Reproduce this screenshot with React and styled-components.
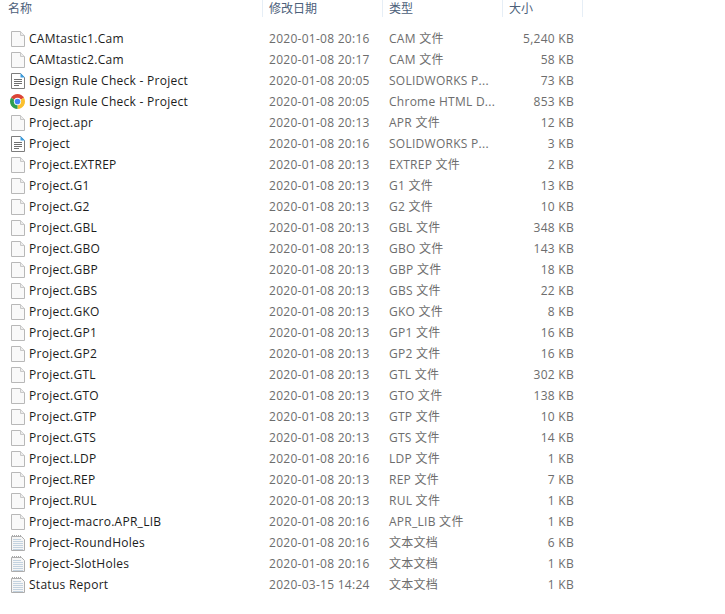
import React from 'react';
import styled, { createGlobalStyle } from 'styled-components';

const Global = createGlobalStyle`
  html, body { margin: 0; background: #fff; }
  body { font-family: "Open Sans", "Noto Sans CJK SC", sans-serif; font-size: 12px; }
`;

const Page = styled.div`
  width: 725px;
  height: 614px;
  overflow: hidden;
  background: #fff;
`;

const Header = styled.div`
  display: flex;
  height: 18px;
`;

const HeadCell = styled.div`
  width: ${(p) => p.$w}px;
  box-sizing: border-box;
  padding-left: ${(p) => p.$pad}px;
  height: 17px;
  line-height: 17px;
  color: #4c607a;
  border-right: 1px solid #e6eef6;
`;

const List = styled.div`
  padding-top: 10px;
`;

const Row = styled.div`
  display: flex;
  align-items: center;
  height: 21px;
  line-height: 21px;
  white-space: nowrap;
  letter-spacing: 0.27px;
`;

const Name = styled.div`
  width: 269px;
  display: flex;
  align-items: center;
  gap: 3px;
  padding-left: 10px;
  box-sizing: border-box;
  color: #1c1c1c;
`;

const Muted = styled.div`
  width: ${(p) => p.$w}px;
  color: #6d6d6d;
  text-align: ${(p) => (p.$right ? 'right' : 'left')};
`;

const Icon = styled.svg`
  width: 16px;
  height: 16px;
  flex: none;
`;

const RoundIcon = styled(Icon)`
  width: 15px;
  height: 15px;
  margin-right: 1px;
`;

const BlankIcon = () => (
  <Icon viewBox="0 0 16 16">
    <path d="M1.5.5h9l4 4v11h-13z" fill="#f9f9f9" stroke="#b8b8b8" />
    <path d="M10.5.5v4h4" fill="#ececec" stroke="#c8c8c8" />
  </Icon>
);

const DocIcon = () => (
  <Icon viewBox="0 0 16 16">
    <path d="M1.5.5h9l4 4v11h-13z" fill="#fff" stroke="#7d7d7d" />
    <path d="M10.5 0l4.5 4.5h-4.5z" fill="#3c9ee0" />
    <path d="M4 6.5h8M4 8.5h8M4 10.5h8M4 12.5h5" stroke="#6f6f6f" />
  </Icon>
);

const TextIcon = () => (
  <Icon viewBox="0 0 16 16">
    <path d="M1.5 1.5h10l3 3v11h-13z" fill="#f6f6f6" stroke="#adadad" />
    <path d="M3 4.5h8M3 6.5h10M3 8.5h10M3 10.5h10M3 12.5h10M3 14.5h10" stroke="#c3d2df" />
    <path d="M2 .5h1M4 .5h1M6 .5h1M8 .5h1M10 .5h1" stroke="#a8a8a8" />
  </Icon>
);

const ChromeIcon = () => (
  <RoundIcon viewBox="0 0 16 16">
    <path d="M8 8L1.1 4A8 8 0 0 1 14.9 4z" fill="#db4437" />
    <path d="M8 8L14.9 4A8 8 0 0 1 8 16z" fill="#fbc02d" />
    <path d="M8 8L8 16A8 8 0 0 1 1.1 4z" fill="#2e9e4f" />
    <circle cx="8" cy="8" r="3.9" fill="#fff" />
    <circle cx="8" cy="8" r="3" fill="#4285f4" />
  </RoundIcon>
);

const icons = { b: BlankIcon, d: DocIcon, t: TextIcon, c: ChromeIcon };

const files = [
  ['b', 'CAMtastic1.Cam', '2020-01-08 20:16', 'CAM 文件', '5,240 KB'],
  ['b', 'CAMtastic2.Cam', '2020-01-08 20:17', 'CAM 文件', '58 KB'],
  ['d', 'Design Rule Check - Project', '2020-01-08 20:05', 'SOLIDWORKS P...', '73 KB'],
  ['c', 'Design Rule Check - Project', '2020-01-08 20:05', 'Chrome HTML D...', '853 KB'],
  ['b', 'Project.apr', '2020-01-08 20:13', 'APR 文件', '12 KB'],
  ['d', 'Project', '2020-01-08 20:16', 'SOLIDWORKS P...', '3 KB'],
  ['b', 'Project.EXTREP', '2020-01-08 20:13', 'EXTREP 文件', '2 KB'],
  ['b', 'Project.G1', '2020-01-08 20:13', 'G1 文件', '13 KB'],
  ['b', 'Project.G2', '2020-01-08 20:13', 'G2 文件', '10 KB'],
  ['b', 'Project.GBL', '2020-01-08 20:13', 'GBL 文件', '348 KB'],
  ['b', 'Project.GBO', '2020-01-08 20:13', 'GBO 文件', '143 KB'],
  ['b', 'Project.GBP', '2020-01-08 20:13', 'GBP 文件', '18 KB'],
  ['b', 'Project.GBS', '2020-01-08 20:13', 'GBS 文件', '22 KB'],
  ['b', 'Project.GKO', '2020-01-08 20:13', 'GKO 文件', '8 KB'],
  ['b', 'Project.GP1', '2020-01-08 20:13', 'GP1 文件', '16 KB'],
  ['b', 'Project.GP2', '2020-01-08 20:13', 'GP2 文件', '16 KB'],
  ['b', 'Project.GTL', '2020-01-08 20:13', 'GTL 文件', '302 KB'],
  ['b', 'Project.GTO', '2020-01-08 20:13', 'GTO 文件', '138 KB'],
  ['b', 'Project.GTP', '2020-01-08 20:13', 'GTP 文件', '10 KB'],
  ['b', 'Project.GTS', '2020-01-08 20:13', 'GTS 文件', '14 KB'],
  ['b', 'Project.LDP', '2020-01-08 20:16', 'LDP 文件', '1 KB'],
  ['b', 'Project.REP', '2020-01-08 20:13', 'REP 文件', '7 KB'],
  ['b', 'Project.RUL', '2020-01-08 20:13', 'RUL 文件', '1 KB'],
  ['b', 'Project-macro.APR_LIB', '2020-01-08 20:16', 'APR_LIB 文件', '1 KB'],
  ['t', 'Project-RoundHoles', '2020-01-08 20:16', '文本文档', '6 KB'],
  ['t', 'Project-SlotHoles', '2020-01-08 20:16', '文本文档', '1 KB'],
  ['t', 'Status Report', '2020-03-15 14:24', '文本文档', '1 KB'],
];

export default function App() {
  return (
    <Page>
      <Global />
      <Header>
        <HeadCell $w={263} $pad={8}>名称</HeadCell>
        <HeadCell $w={120} $pad={6}>修改日期</HeadCell>
        <HeadCell $w={120} $pad={6}>类型</HeadCell>
        <HeadCell $w={80} $pad={6}>大小</HeadCell>
      </Header>
      <List>
        {files.map(([icon, name, date, type, size], i) => {
          const Glyph = icons[icon];
          return (
            <Row key={i}>
              <Name><Glyph />{name}</Name>
              <Muted $w={120}>{date}</Muted>
              <Muted $w={100}>{type}</Muted>
              <Muted $w={85} $right>{size}</Muted>
            </Row>
          );
        })}
      </List>
    </Page>
  );
}
